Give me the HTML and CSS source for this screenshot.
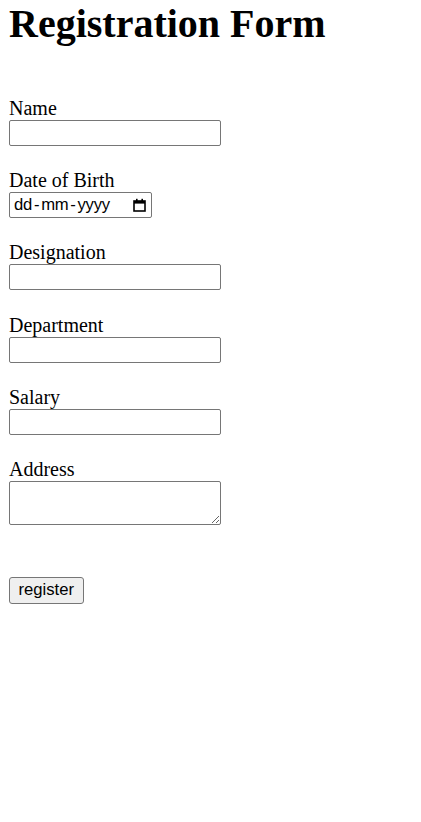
FILE: index.html
```html
<!DOCTYPE html>
<html lang="en">
<head>
<meta charset="utf-8">
<title>Registration Form</title>
<link rel="stylesheet" href="styles.css">
</head>
<body>
<h1 class="title">Registration Form</h1>
<form class="form">
  <div class="field">
    <label class="label" for="name">Name</label>
    <input class="input" type="text" id="name">
  </div>
  <div class="field">
    <label class="label" for="dob">Date of Birth</label>
    <div class="date-field" id="dob" tabindex="0">
      <span class="date-text">dd<span class="sep">-</span>mm<span class="sep">-</span>yyyy</span>
      <svg class="cal-icon" width="13" height="14" viewBox="0 0 13 14" aria-hidden="true">
        <rect x="1" y="3" width="11" height="10" fill="none" stroke="#000" stroke-width="1.6"/>
        <rect x="1" y="3" width="11" height="2.6" fill="#000"/>
        <rect x="3" y="0.8" width="1.6" height="3" fill="#000"/>
        <rect x="8.4" y="0.8" width="1.6" height="3" fill="#000"/>
      </svg>
    </div>
  </div>
  <div class="field">
    <label class="label" for="designation">Designation</label>
    <input class="input" type="text" id="designation">
  </div>
  <div class="field">
    <label class="label" for="department">Department</label>
    <input class="input" type="text" id="department">
  </div>
  <div class="field">
    <label class="label" for="salary">Salary</label>
    <input class="input" type="text" id="salary">
  </div>
  <div class="field field-last">
    <label class="label" for="address">Address</label>
    <textarea class="textarea" id="address"></textarea>
  </div>
  <button class="button" type="submit">register</button>
</form>
</body>
</html>
```

FILE: styles.css
```css
html, body {
  background: #fff;
}
body {
  margin: 0;
  padding: 1px 9px 0;
  font-family: "Liberation Serif", "Times New Roman", serif;
  font-size: 20px;
  color: #000;
}
.title {
  margin: 0 0 50px;
  font-size: 40px;
  line-height: 46px;
  font-weight: bold;
}
.form {
  display: flex;
  flex-direction: column;
  align-items: flex-start;
}
.field {
  display: flex;
  flex-direction: column;
  align-items: flex-start;
  margin-bottom: 23.2px;
}
.label {
  display: block;
  line-height: 23px;
}
.input {
  box-sizing: border-box;
  width: 212px;
  height: 26px;
  margin: 0;
  padding: 1px 3px;
  border: 1px solid #767676;
  border-radius: 2px;
  font-family: "Liberation Sans", Arial, sans-serif;
  font-size: 16.67px;
  background: #fff;
}
.date-field {
  box-sizing: border-box;
  width: 143px;
  height: 26px;
  display: flex;
  align-items: center;
  justify-content: space-between;
  padding: 0 5px 0 4px;
  border: 1px solid #767676;
  border-radius: 2px;
  font-family: "Liberation Sans", Arial, sans-serif;
  font-size: 16.67px;
  color: #000;
  background: #fff;
}
.date-text {
  display: inline-flex;
  letter-spacing: -0.3px;
}
.sep {
  margin: 0 2px;
}
.cal-icon {
  display: block;
  flex: none;
}
.textarea {
  box-sizing: border-box;
  display: block;
  width: 212px;
  height: 44px;
  margin: 0;
  padding: 2px;
  border: 1px solid #767676;
  border-radius: 2px;
  font-family: "Liberation Mono", monospace;
  font-size: 16.67px;
}
.field-last {
  margin-bottom: 52px;
}
.button {
  box-sizing: border-box;
  height: 27px;
  padding: 1px 8.5px;
  border: 1px solid #767676;
  border-radius: 3px;
  background: #efefef;
  font-family: "Liberation Sans", Arial, sans-serif;
  font-size: 16.67px;
  color: #000;
}
```
